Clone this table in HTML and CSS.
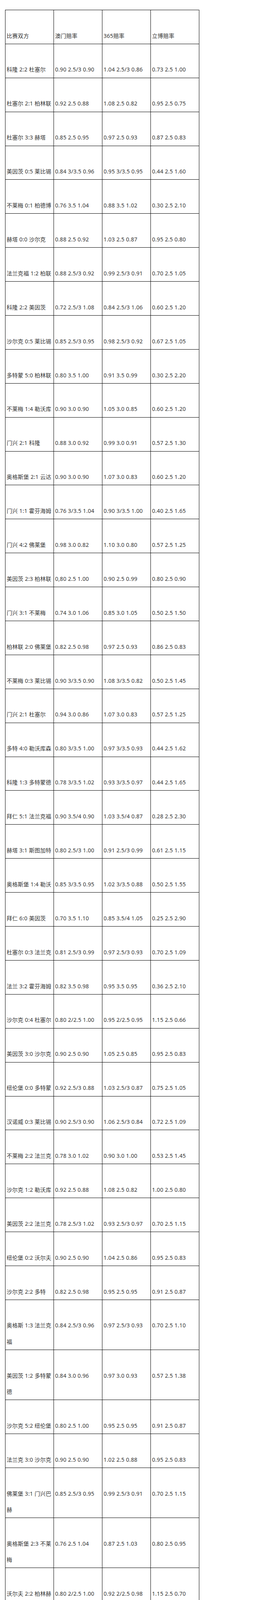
FILE: index.html
```html
<!DOCTYPE html>
<html lang="zh-CN">
<head>
<meta charset="utf-8">
<title>赔率对比</title>
<link rel="stylesheet" href="styles.css">
</head>
<body>
<div class="page">
<table class="odds">
<colgroup><col class="c"><col class="c"><col class="c"><col class="c"></colgroup>
<tbody>
<tr><td>比赛双方</td><td>澳门赔率</td><td>365赔率</td><td>立博赔率</td></tr>
<tr><td>科隆 2:2 杜塞尔</td><td>0.90 2.5/3 0.90</td><td>1.04 2.5/3 0.86</td><td>0.73 2.5 1.00</td></tr>
<tr><td>杜塞尔 2:1 柏林联</td><td>0.92 2.5 0.88</td><td>1.08 2.5 0.82</td><td>0.95 2.5 0.75</td></tr>
<tr><td>杜塞尔 3:3 赫塔</td><td>0.85 2.5 0.95</td><td>0.97 2.5 0.93</td><td>0.87 2.5 0.83</td></tr>
<tr><td>美因茨 0:5 莱比锡</td><td>0.84 3/3.5 0.96</td><td>0.95 3/3.5 0.95</td><td>0.44 2.5 1.60</td></tr>
<tr><td>不莱梅 0:1 柏德博</td><td>0.76 3.5 1.04</td><td>0.88 3.5 1.02</td><td>0.30 2.5 2.10</td></tr>
<tr><td>赫塔 0:0 沙尔克</td><td>0.88 2.5 0.92</td><td>1.03 2.5 0.87</td><td>0.95 2.5 0.80</td></tr>
<tr><td>法兰克福 1:2 柏联</td><td>0.88 2.5/3 0.92</td><td>0.99 2.5/3 0.91</td><td>0.70 2.5 1.05</td></tr>
<tr><td>科隆 2:2 美因茨</td><td>0.72 2.5/3 1.08</td><td>0.84 2.5/3 1.06</td><td>0.60 2.5 1.20</td></tr>
<tr><td>沙尔克 0:5 莱比锡</td><td>0.85 2.5/3 0.95</td><td>0.98 2.5/3 0.92</td><td>0.67 2.5 1.05</td></tr>
<tr><td>多特蒙 5:0 柏林联</td><td>0.80 3.5 1.00</td><td>0.91 3.5 0.99</td><td>0.30 2.5 2.20</td></tr>
<tr><td>不莱梅 1:4 勒沃库</td><td>0.90 3.0 0.90</td><td>1.05 3.0 0.85</td><td>0.60 2.5 1.20</td></tr>
<tr><td>门兴 2:1 科隆</td><td>0.88 3.0 0.92</td><td>0.99 3.0 0.91</td><td>0.57 2.5 1.30</td></tr>
<tr><td>奥格斯堡 2:1 云达</td><td>0.90 3.0 0.90</td><td>1.07 3.0 0.83</td><td>0.60 2.5 1.20</td></tr>
<tr><td>门兴 1:1 霍芬海姆</td><td>0.76 3/3.5 1.04</td><td>0.90 3/3.5 1.00</td><td>0.40 2.5 1.65</td></tr>
<tr><td>门兴 4:2 佛莱堡</td><td>0.98 3.0 0.82</td><td>1.10 3.0 0.80</td><td>0.57 2.5 1.25</td></tr>
<tr><td>美因茨 2:3 柏林联</td><td>0,80 2.5 1.00</td><td>0.90 2.5 0.99</td><td>0.80 2.5 0.90</td></tr>
<tr><td>门兴 3:1 不莱梅</td><td>0.74 3.0 1.06</td><td>0.85 3.0 1.05</td><td>0.50 2.5 1.50</td></tr>
<tr><td>柏林联 2:0 佛莱堡</td><td>0.82 2.5 0.98</td><td>0.97 2.5 0.93</td><td>0.86 2.5 0.83</td></tr>
<tr><td>不莱梅 0:3 莱比锡</td><td>0.90 3/3.5 0.90</td><td>1.08 3/3.5 0.82</td><td>0.50 2.5 1.45</td></tr>
<tr><td>门兴 2:1 杜塞尔</td><td>0.94 3.0 0.86</td><td>1.07 3.0 0.83</td><td>0.57 2.5 1.25</td></tr>
<tr><td>多特 4:0 勒沃库森</td><td>0.80 3/3.5 1.00</td><td>0.97 3/3.5 0.93</td><td>0.44 2.5 1.62</td></tr>
<tr><td>科隆 1:3 多特蒙德</td><td>0.78 3/3.5 1.02</td><td>0.93 3/3.5 0.97</td><td>0.44 2.5 1.65</td></tr>
<tr><td>拜仁 5:1 法兰克福</td><td>0.90 3.5/4 0.90</td><td>1.03 3.5/4 0.87</td><td>0.28 2.5 2.30</td></tr>
<tr><td>赫塔 3:1 斯图加特</td><td>0.80 2.5/3 1.00</td><td>0.91 2.5/3 0.99</td><td>0.61 2.5 1.15</td></tr>
<tr><td>奥格斯堡 1:4 勒沃</td><td>0.85 3/3.5 0.95</td><td>1.02 3/3.5 0.88</td><td>0.50 2.5 1.55</td></tr>
<tr><td>拜仁 6:0 美因茨</td><td>0.70 3.5 1.10</td><td>0.85 3.5/4 1.05</td><td>0.25 2.5 2.90</td></tr>
<tr><td>杜塞尔 0:3 法兰克</td><td>0.81 2.5/3 0.99</td><td>0.97 2.5/3 0.93</td><td>0.70 2.5 1.09</td></tr>
<tr><td>法兰 3:2 霍芬海姆</td><td>0.82 3.5 0.98</td><td>0.95 3.5 0.95</td><td>0.36 2.5 2.10</td></tr>
<tr><td>沙尔克 0:4 杜塞尔</td><td>0.80 2/2.5 1.00</td><td>0.95 2/2.5 0.95</td><td>1.15 2.5 0.66</td></tr>
<tr><td>美因茨 3:0 沙尔克</td><td>0.90 2.5 0.90</td><td>1.05 2.5 0.85</td><td>0.95 2.5 0.83</td></tr>
<tr><td>纽伦堡 0:0 多特蒙</td><td>0.92 2.5/3 0.88</td><td>1.03 2.5/3 0.87</td><td>0.75 2.5 1.05</td></tr>
<tr><td>汉诺威 0:3 莱比锡</td><td>0.90 2.5/3 0.90</td><td>1.06 2.5/3 0.84</td><td>0.72 2.5 1.09</td></tr>
<tr><td>不莱梅 2:2 法兰克</td><td>0.78 3.0 1.02</td><td>0.90 3.0 1.00</td><td>0.53 2.5 1.45</td></tr>
<tr><td>沙尔克 1:2 勒沃库</td><td>0.92 2.5 0.88</td><td>1.08 2.5 0.82</td><td>1.00 2.5 0.80</td></tr>
<tr><td>美因茨 2:2 法兰克</td><td>0.78 2.5/3 1.02</td><td>0.93 2.5/3 0.97</td><td>0.70 2.5 1.15</td></tr>
<tr><td>纽伦堡 0:2 沃尔夫</td><td>0.90 2.5 0.90</td><td>1.04 2.5 0.86</td><td>0.95 2.5 0.83</td></tr>
<tr><td>沙尔克 2:2 多特</td><td>0.82 2.5 0.98</td><td>0.95 2.5 0.95</td><td>0.91 2.5 0.87</td></tr>
<tr><td>奥格斯 1:3 法兰克福</td><td>0.84 2.5/3 0.96</td><td>0.97 2.5/3 0.93</td><td>0.70 2.5 1.10</td></tr>
<tr><td>美因茨 1:2 多特蒙德</td><td>0.84 3.0 0.96</td><td>0.97 3.0 0.93</td><td>0.57 2.5 1.38</td></tr>
<tr><td>沙尔克 5:2 纽伦堡</td><td>0.80 2.5 1.00</td><td>0.95 2.5 0.95</td><td>0.91 2.5 0.87</td></tr>
<tr><td>法兰克 3:0 沙尔克</td><td>0.90 2.5 0.90</td><td>1.02 2.5 0.88</td><td>0.95 2.5 0.83</td></tr>
<tr><td>佛莱堡 3:1 门兴巴赫</td><td>0.85 2.5/3 0.95</td><td>0.99 2.5/3 0.91</td><td>0.70 2.5 1.15</td></tr>
<tr><td>奥格斯堡 2:3 不莱梅</td><td>0.76 2.5 1.04</td><td>0.87 2.5 1.03</td><td>0.80 2.5 0.95</td></tr>
<tr><td>沃尔夫 2:2 柏林赫塔</td><td>0.80 2/2.5 1.00</td><td>0.92 2/2.5 0.98</td><td>1.15 2.5 0.70</td></tr>
<tr><td>拜仁 4:1 斯图加特</td><td>0.85 4.0 0.95</td><td>0.98 4.0 0.92</td><td>0.22 2.5 3.00</td></tr>
<tr><td>莱比锡 1:4 勒沃库森</td><td>0.76 2.5/3 1.04</td><td>0.89 2.5/3 1.01</td><td>0.62 2.5 1.25</td></tr>
<tr><td>霍芬海姆 1:0 斯图加</td><td>0.80 2.5/3 1.00</td><td>0.97 2.5/3 0.93</td><td>0.70 2.5 1.10</td></tr>
<tr><td>佛莱堡 0:0 汉堡</td><td>0.85 2/2.5 0.95</td><td>0.99 2/2.5 0.91</td><td>1.25 2.5 0.62</td></tr>
<tr><td>斯图加特 2:1 多特蒙</td><td>0.78 3.0 1.02</td><td>0.95 3.0 0.95</td><td>0.57 2.5 1.40</td></tr>
<tr><td>莱比锡 2:1 汉诺威</td><td>0.75 3.0 1.05</td><td>0.86 3.0 1.04</td><td>0.53 2.5 1.45</td></tr>
<tr><td>勒沃库 2:2 沃尔夫</td><td>0.95 3.0 0.85</td><td>1.07 3.0 0.83</td><td>0.62 2.5 1.25</td></tr>
<tr><td>柏林赫 2:2 拜仁</td><td>0.80 3.0 1.00</td><td>0.91 3.0 0.99</td><td>0.53 2.5 1.50</td></tr>
<tr><td>美因茨 1:0 柏林赫塔</td><td>0.85 2/2.5 0.95</td><td>0.97 2/2.5 0.93</td><td>1.25 2.5 0.62</td></tr>
<tr><td>多特蒙 6:1 门兴巴赫</td><td>0.88 3.5 0.92</td><td>1.01 3.5 0.89</td><td>0.36 2.5 2.10</td></tr>
<tr><td>美因茨 2:3 霍芬</td><td>0.95 2.5/3 0.85</td><td>1.07 2.5/3 0.83</td><td>0.80 2.5 1.00</td></tr>
<tr><td>勒沃库森 2:2 霍芬海</td><td>0.75 3.0 1.05</td><td>0.97 3.0 0.93</td><td>0.57 2.5 1.35</td></tr>
</tbody>
</table>
</div>
</body>
</html>
```

FILE: styles.css
```css
html, body {
  margin: 0;
  padding: 0;
  background: #fff;
}

.page {
  padding: 25px 0 0 13px;
}

.odds {
  width: 497px;
  border-collapse: collapse;
  table-layout: fixed;
  font-family: "Noto Sans", "Noto Sans CJK SC", sans-serif;
  font-size: 14px;
  letter-spacing: 0.3px;
  color: #333;
}

.odds .c {
  width: 25%;
}

.odds td {
  border: 1px solid #000;
  padding: 44.6px 2px 0 3px;
  line-height: 41.3px;
  vertical-align: top;
  text-align: left;
}
```
